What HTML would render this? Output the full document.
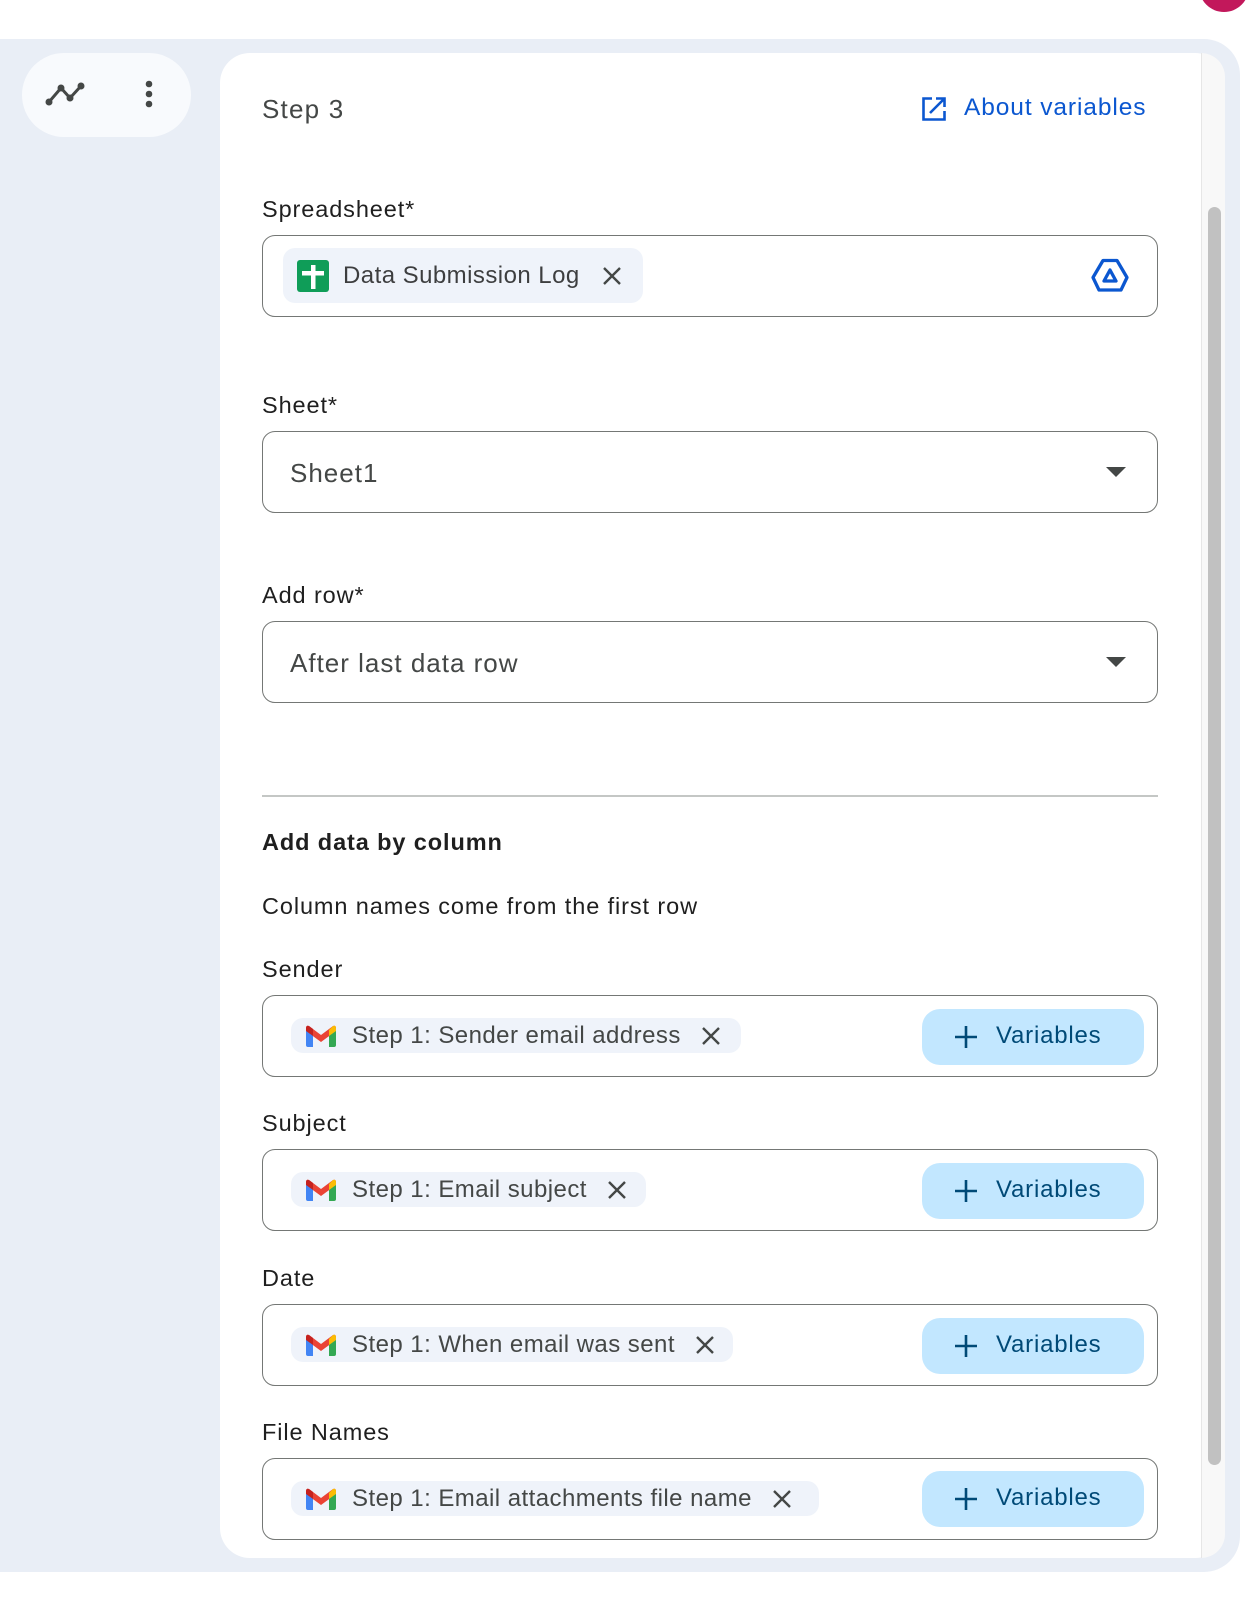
<!DOCTYPE html>
<html><head><meta charset="utf-8"><style>
*{margin:0;padding:0;box-sizing:border-box}
body{width:1260px;height:1600px;background:#fff;position:relative;overflow:hidden;font-family:"Liberation Sans",Arial,sans-serif;color:#1f1f1f}
.a{position:absolute}
.gray{left:0;top:39px;width:1240px;height:1533px;background:#e9eef6;border-radius:0 36px 36px 0}
.pill{left:22px;top:53px;width:169px;height:84px;background:#f8fafd;border-radius:42px}
.card{left:220px;top:53px;width:1005px;height:1505px;background:#fff;border-radius:30px 30px 30px 30px;overflow:hidden}
.track{left:1201px;top:53px;width:24px;height:1505px;background:#f8f8f8;border-left:1px solid #e6e6e6;border-radius:0 30px 30px 0}
.thumb{left:1208px;top:207px;width:13px;height:1258px;background:#c1c1c1;border-radius:7px}
.lbl{left:262px;font-size:23.5px;line-height:28px;color:#1f1f1f;letter-spacing:0.9px}
.box{left:262px;width:896px;height:82px;border:1.5px solid #747775;border-radius:13px}
.val{font-size:26px;color:#444746;line-height:30px;letter-spacing:1px}
.chip{background:#eff3fa;border-radius:12px;height:36px;display:flex;align-items:center;font-size:24px;color:#444746;letter-spacing:0.45px}
.vbtn{left:922px;width:222px;height:56px;background:#c2e7ff;border-radius:18px;color:#004a77;font-size:24px;letter-spacing:0.8px}
</style></head><body>
<div class="a" style="left:1199px;top:-38px;width:50px;height:50px;border-radius:50%;background:#c2185b"></div>
<div class="a gray"></div>
<div class="a pill"></div>
<svg class="a" style="left:40px;top:78px" width="50" height="32"><polyline points="9,24 21,10 30,20 41,8" fill="none" stroke="#444746" stroke-width="3" stroke-linejoin="round"/><circle cx="9" cy="24" r="3.5" fill="#444746"/><circle cx="21" cy="10" r="3.5" fill="#444746"/><circle cx="30" cy="20" r="3.5" fill="#444746"/><circle cx="41" cy="8" r="3.5" fill="#444746"/></svg>
<svg class="a" style="left:141px;top:78px" width="16" height="32"><circle cx="8" cy="6" r="3.3" fill="#444746"/><circle cx="8" cy="16" r="3.3" fill="#444746"/><circle cx="8" cy="26" r="3.3" fill="#444746"/></svg>
<div class="a card"></div>
<div class="a track"></div>
<div class="a thumb"></div>

<div class="a" style="left:262px;top:93px;font-size:26px;line-height:32px;color:#444746;letter-spacing:1.2px">Step 3</div>
<svg class="a" style="left:921px;top:96px" width="26" height="26" viewBox="0 0 26 26"><path d="M11 2.5H2.5v21h21V15" fill="none" stroke="#0b57d0" stroke-width="2.6"/><path d="M9 17L23 3M15 2.5h8.5V11" fill="none" stroke="#0b57d0" stroke-width="2.6"/></svg>
<div class="a" style="left:964px;top:93px;font-size:24.5px;line-height:30px;color:#0b57d0;letter-spacing:0.9px">About variables</div>

<div class="a lbl" style="top:195px">Spreadsheet*</div>
<div class="a box" style="top:235px"></div>
<div class="a chip" style="left:283px;top:248px;width:360px;height:55px;padding-left:14px">
<svg width="32" height="32" viewBox="0 0 32 32"><rect width="32" height="32" rx="3" fill="#0f9d58"/><rect x="14" y="5" width="4.5" height="24" fill="#fff"/><rect x="5" y="11" width="22" height="4.5" fill="#fff"/></svg>
<span style="margin-left:14px;font-size:24px;color:#1f1f1f;opacity:.85">Data Submission Log</span>
<svg style="margin-left:22px" width="20" height="20"><path d="M2 2L18 18M18 2L2 18" stroke="#444746" stroke-width="2.4"/></svg>
</div>
<svg class="a" style="left:1090px;top:258px" width="40" height="35" viewBox="0 0 40 35"><path d="M13 2.5H27L37 19.5L31 32H9L3 19.5Z" fill="none" stroke="#0b57d0" stroke-width="3.3" stroke-linejoin="round"/><path d="M20 12L26 23H14Z" fill="none" stroke="#0b57d0" stroke-width="3.3" stroke-linejoin="round"/></svg>

<div class="a lbl" style="top:391px">Sheet*</div>
<div class="a box" style="top:431px"></div>
<div class="a val" style="left:290px;top:458px">Sheet1</div>
<svg class="a" style="left:1106px;top:467px" width="20" height="11"><path d="M0 0H20L10 10Z" fill="#444746"/></svg>

<div class="a lbl" style="top:581px">Add row*</div>
<div class="a box" style="top:621px"></div>
<div class="a val" style="left:290px;top:648px">After last data row</div>
<svg class="a" style="left:1106px;top:657px" width="20" height="11"><path d="M0 0H20L10 10Z" fill="#444746"/></svg>

<div class="a" style="left:262px;top:795px;width:896px;height:2px;background:#c4c7c5"></div>
<div class="a lbl" style="top:828px;font-weight:bold">Add data by column</div>
<div class="a lbl" style="top:892px">Column names come from the first row</div>

<div class="a lbl" style="top:955px">Sender</div>
<div class="a box" style="top:995px"></div>
<div class="a chip" style="left:291px;top:1018px;width:450px;height:35px;padding-left:15px">
<svg width="30" height="22" viewBox="0 0 30 22"><path d="M0 3.5Q0 0 3 1L15 10L27 1Q30 0 30 3.5V6L15 17L0 6Z" fill="#ea4335"/><path d="M0 4V20Q0 22 2 22H7V8L0 3Z" fill="#4285f4"/><path d="M30 4V20Q30 22 28 22H23V8L30 3Z" fill="#34a853"/><path d="M23 5L27 1Q30 0 30 3.5V6L23 11Z" fill="#fbbc04"/><path d="M0 3.5Q0 0 3 1L7 4V11L0 6Z" fill="#c5221f"/></svg>
<span style="margin-left:16px">Step 1: Sender email address</span>
<svg style="margin-left:20px" width="20" height="20"><path d="M2 2L18 18M18 2L2 18" stroke="#444746" stroke-width="2.4"/></svg>
</div>
<div class="a vbtn" style="top:1009px"><svg class="a" style="left:33px;top:17px" width="22" height="22"><path d="M11 0V22M0 11H22" stroke="#004a77" stroke-width="2.6"/></svg><span class="a" style="left:74px;top:13px">Variables</span></div>

<div class="a lbl" style="top:1109px">Subject</div>
<div class="a box" style="top:1149px"></div>
<div class="a chip" style="left:291px;top:1172px;width:355px;height:35px;padding-left:15px">
<svg width="30" height="22" viewBox="0 0 30 22"><path d="M0 3.5Q0 0 3 1L15 10L27 1Q30 0 30 3.5V6L15 17L0 6Z" fill="#ea4335"/><path d="M0 4V20Q0 22 2 22H7V8L0 3Z" fill="#4285f4"/><path d="M30 4V20Q30 22 28 22H23V8L30 3Z" fill="#34a853"/><path d="M23 5L27 1Q30 0 30 3.5V6L23 11Z" fill="#fbbc04"/><path d="M0 3.5Q0 0 3 1L7 4V11L0 6Z" fill="#c5221f"/></svg>
<span style="margin-left:16px">Step 1: Email subject</span>
<svg style="margin-left:20px" width="20" height="20"><path d="M2 2L18 18M18 2L2 18" stroke="#444746" stroke-width="2.4"/></svg>
</div>
<div class="a vbtn" style="top:1163px"><svg class="a" style="left:33px;top:17px" width="22" height="22"><path d="M11 0V22M0 11H22" stroke="#004a77" stroke-width="2.6"/></svg><span class="a" style="left:74px;top:13px">Variables</span></div>

<div class="a lbl" style="top:1264px">Date</div>
<div class="a box" style="top:1304px"></div>
<div class="a chip" style="left:291px;top:1327px;width:442px;height:35px;padding-left:15px">
<svg width="30" height="22" viewBox="0 0 30 22"><path d="M0 3.5Q0 0 3 1L15 10L27 1Q30 0 30 3.5V6L15 17L0 6Z" fill="#ea4335"/><path d="M0 4V20Q0 22 2 22H7V8L0 3Z" fill="#4285f4"/><path d="M30 4V20Q30 22 28 22H23V8L30 3Z" fill="#34a853"/><path d="M23 5L27 1Q30 0 30 3.5V6L23 11Z" fill="#fbbc04"/><path d="M0 3.5Q0 0 3 1L7 4V11L0 6Z" fill="#c5221f"/></svg>
<span style="margin-left:16px">Step 1: When email was sent</span>
<svg style="margin-left:20px" width="20" height="20"><path d="M2 2L18 18M18 2L2 18" stroke="#444746" stroke-width="2.4"/></svg>
</div>
<div class="a vbtn" style="top:1318px"><svg class="a" style="left:33px;top:17px" width="22" height="22"><path d="M11 0V22M0 11H22" stroke="#004a77" stroke-width="2.6"/></svg><span class="a" style="left:74px;top:13px">Variables</span></div>

<div class="a lbl" style="top:1418px">File Names</div>
<div class="a box" style="top:1458px"></div>
<div class="a chip" style="left:291px;top:1481px;width:528px;height:35px;padding-left:15px">
<svg width="30" height="22" viewBox="0 0 30 22"><path d="M0 3.5Q0 0 3 1L15 10L27 1Q30 0 30 3.5V6L15 17L0 6Z" fill="#ea4335"/><path d="M0 4V20Q0 22 2 22H7V8L0 3Z" fill="#4285f4"/><path d="M30 4V20Q30 22 28 22H23V8L30 3Z" fill="#34a853"/><path d="M23 5L27 1Q30 0 30 3.5V6L23 11Z" fill="#fbbc04"/><path d="M0 3.5Q0 0 3 1L7 4V11L0 6Z" fill="#c5221f"/></svg>
<span style="margin-left:16px">Step 1: Email attachments file name</span>
<svg style="margin-left:20px" width="20" height="20"><path d="M2 2L18 18M18 2L2 18" stroke="#444746" stroke-width="2.4"/></svg>
</div>
<div class="a vbtn" style="top:1471px"><svg class="a" style="left:33px;top:17px" width="22" height="22"><path d="M11 0V22M0 11H22" stroke="#004a77" stroke-width="2.6"/></svg><span class="a" style="left:74px;top:13px">Variables</span></div>
</body></html>
